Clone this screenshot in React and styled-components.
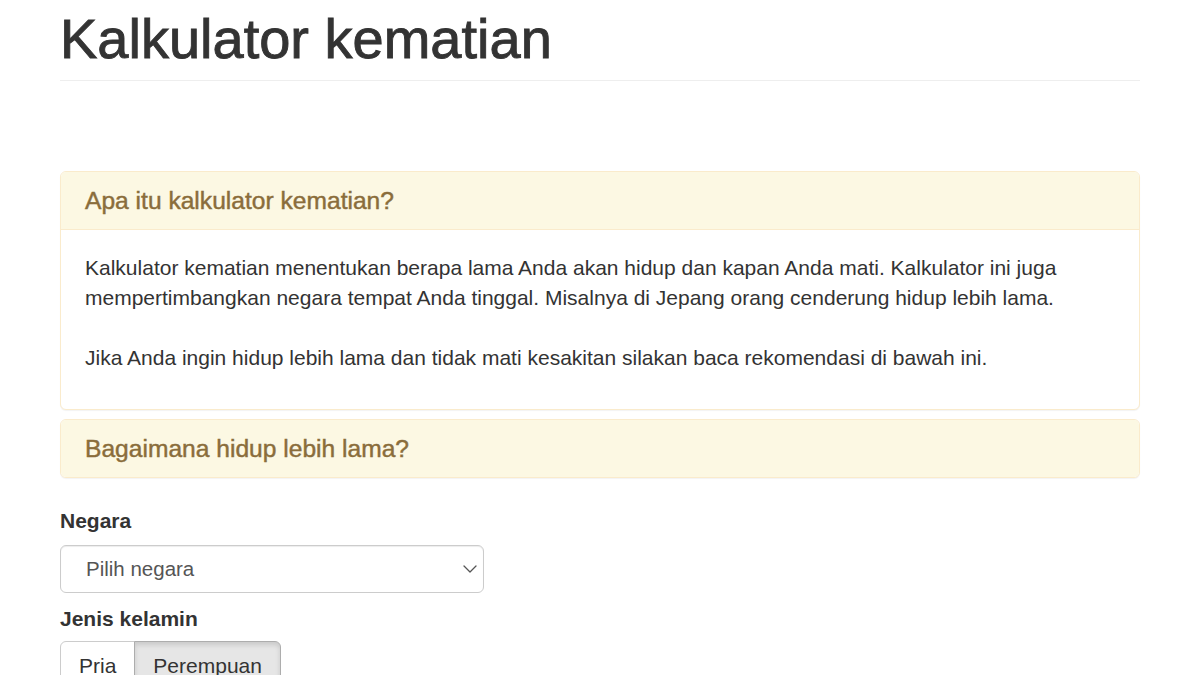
import React from "react";
import styled, { createGlobalStyle } from "styled-components";

const GlobalStyle = createGlobalStyle`
  html, body {
    margin: 0;
    padding: 0;
    background: #fff;
  }
  body {
    font-family: "Liberation Sans", Arial, sans-serif;
    color: #333;
    overflow: hidden;
  }
`;

const Container = styled.div`
  width: 1080px;
  margin: 0 auto;
`;

const PageHeader = styled.div`
  margin-top: 8px;
  padding-bottom: 10px;
  border-bottom: 1px solid #eee;
`;

const Title = styled.h1`
  margin: 0;
  font-size: 56px;
  font-weight: 400;
  line-height: 1.1;
  color: #333;
  -webkit-text-stroke: 0.9px #333;
`;

const Panels = styled.div`
  margin-top: 90px;
  display: flex;
  flex-direction: column;
  gap: 9px;
`;

const Panel = styled.div`
  background: #fff;
  border: 1px solid #faebcc;
  border-radius: 6px;
  box-shadow: 0 1px 1px rgba(0, 0, 0, 0.05);
  overflow: hidden;
`;

const PanelHeading = styled.div`
  background: #fcf8e3;
  color: #8a6d3b;
  padding: 15px 24px;
  border-bottom: ${(p) => (p.$open ? "1px solid #faebcc" : "none")};
`;

const PanelTitle = styled.h3`
  margin: 0;
  font-size: 24.6px;
  font-weight: 400;
  line-height: 1.1;
  -webkit-text-stroke: 0.45px #8a6d3b;
`;

const PanelBody = styled.div`
  padding: 23px 24px 36px;
  font-size: 21px;
  line-height: 30px;

  p {
    margin: 0;
  }
  p + p {
    margin-top: 30px;
  }
`;

const Form = styled.div`
  margin-top: 28px;
`;

const Label = styled.label`
  display: block;
  font-size: 21px;
  font-weight: 700;
  line-height: 30px;
  margin-bottom: ${(p) => p.$gap}px;
`;

const SelectBox = styled.div`
  width: 424px;
  height: 48px;
  box-sizing: border-box;
  border: 1px solid #ccc;
  border-radius: 6px;
  box-shadow: inset 0 1px 1px rgba(0, 0, 0, 0.075);
  display: flex;
  align-items: center;
  justify-content: space-between;
  padding: 0 6px 0 25px;
  font-size: 20.5px;
  color: #555;
  margin-bottom: 11px;
`;

const Chevron = styled.svg`
  width: 14px;
  height: 8px;
`;

const ButtonGroup = styled.div`
  display: inline-flex;
`;

const ToggleButton = styled.button`
  font-family: inherit;
  font-size: 21px;
  line-height: 30px;
  color: #333;
  height: 48px;
  padding: 9px 18px;
  box-sizing: border-box;
  border: 1px solid ${(p) => (p.$active ? "#adadad" : "#ccc")};
  background: ${(p) => (p.$active ? "#e6e6e6" : "#fff")};
  box-shadow: ${(p) => (p.$active ? "inset 0 3px 5px rgba(0, 0, 0, 0.125)" : "none")};
  margin-left: -1px;
  cursor: pointer;

  &:first-child {
    margin-left: 0;
    border-radius: 6px 0 0 6px;
  }
  &:last-child {
    border-radius: 0 6px 6px 0;
  }
`;

export default function App() {
  return (
    <>
      <GlobalStyle />
      <Container>
        <PageHeader>
          <Title>Kalkulator kematian</Title>
        </PageHeader>

        <Panels>
          <Panel>
            <PanelHeading $open>
              <PanelTitle>Apa itu kalkulator kematian?</PanelTitle>
            </PanelHeading>
            <PanelBody>
              <p>
                Kalkulator kematian menentukan berapa lama Anda akan hidup dan kapan Anda mati. Kalkulator ini juga
                mempertimbangkan negara tempat Anda tinggal. Misalnya di Jepang orang cenderung hidup lebih lama.
              </p>
              <p>
                Jika Anda ingin hidup lebih lama dan tidak mati kesakitan silakan baca rekomendasi di bawah ini.
              </p>
            </PanelBody>
          </Panel>
          <Panel>
            <PanelHeading>
              <PanelTitle>Bagaimana hidup lebih lama?</PanelTitle>
            </PanelHeading>
          </Panel>
        </Panels>

        <Form>
          <Label $gap={9}>Negara</Label>
          <SelectBox>
            <span>Pilih negara</span>
            <Chevron viewBox="0 0 14 8" fill="none">
              <path d="M1 1l6 6 6-6" stroke="#555" strokeWidth="1.3" strokeLinecap="round" strokeLinejoin="round" />
            </Chevron>
          </SelectBox>
          <Label $gap={7}>Jenis kelamin</Label>
          <ButtonGroup>
            <ToggleButton>Pria</ToggleButton>
            <ToggleButton $active>Perempuan</ToggleButton>
          </ButtonGroup>
        </Form>
      </Container>
    </>
  );
}
